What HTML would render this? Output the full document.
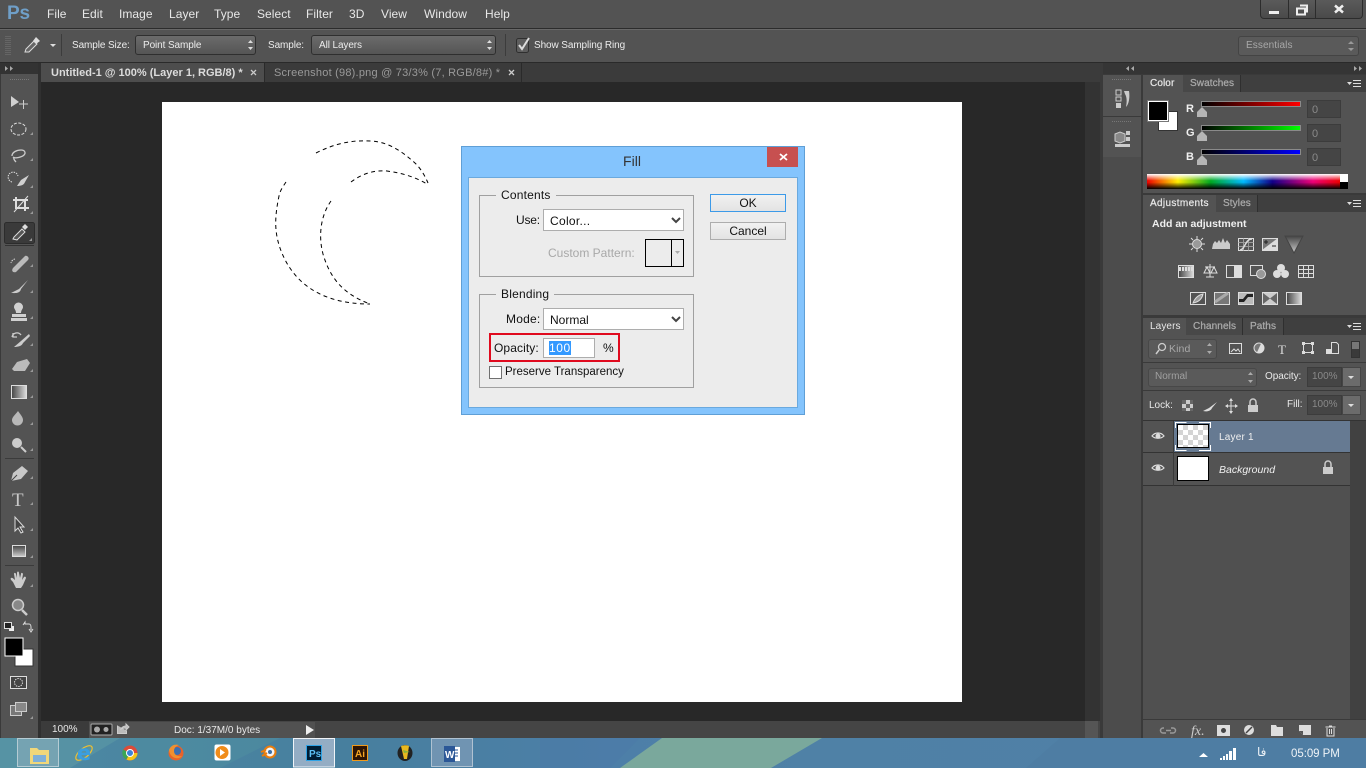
<!DOCTYPE html>
<html><head><meta charset="utf-8"><title>Photoshop Fill</title>
<style>
html,body{margin:0;padding:0;width:1366px;height:768px;overflow:hidden;background:#282828}
*{box-sizing:border-box}
.a,.t{position:absolute}
.t{font:11px "Liberation Sans","DejaVu Sans",sans-serif;white-space:nowrap;color:#e6e6e6;line-height:14px}
.m{font-size:12px;color:#e8e8e8;top:7px;letter-spacing:.05px}
.o{top:39px;font-size:10px;letter-spacing:-.1px;color:#ececec}
.sel{position:absolute;border:1px solid #2f2f2f;border-radius:3px;background:linear-gradient(#6b6b6b,#555)}
.d{font:12px "Liberation Sans",sans-serif;color:#111;letter-spacing:.2px}
.p{font-size:10px;font-weight:normal;letter-spacing:.1px;-webkit-text-stroke:.25px currentColor}
.dim{color:#999}
.ws{position:absolute;background:#fff;border:1px solid #adadad}
.btn{position:absolute;background:linear-gradient(#f1f1f1,#e3e3e3);border:1px solid #adadad;text-align:center;font:12px/17px "Liberation Sans",sans-serif;color:#111}
</style></head><body>
<!-- chrome backgrounds -->
<div class="a" style="left:0;top:0;width:1366px;height:28px;background:#535353"></div>
<div class="a" style="left:0;top:28px;width:1366px;height:1px;background:#2c2c2c"></div>
<div class="a" style="left:0;top:29px;width:1366px;height:33px;background:#535353;border-top:1px solid #686868"></div>
<div class="a" style="left:0;top:62px;width:1366px;height:1px;background:#2a2a2a"></div>
<div class="a" style="left:0;top:63px;width:1103px;height:19px;background:#3b3b3b"></div>
<div class="a" style="left:40px;top:82px;width:1063px;height:656px;background:#282828"></div>
<!-- tabs -->
<div class="a" style="left:41px;top:63px;width:223px;height:19px;background:#4d4d4d"></div>
<div class="a" style="left:264px;top:63px;width:1px;height:19px;background:#2a2a2a"></div>
<div class="a" style="left:521px;top:63px;width:1px;height:19px;background:#2a2a2a"></div>
<div class="t" style="left:51px;top:66px;font-size:11px;font-weight:bold;color:#dcdcdc;letter-spacing:0">Untitled-1 @ 100% (Layer 1, RGB/8) *</div>
<div class="t" style="left:274px;top:66px;font-size:11px;color:#9a9a9a;letter-spacing:.22px">Screenshot (98).png @ 73/3% (7, RGB/8#) *</div>
<!-- left toolbar bg -->
<div class="a" style="left:0;top:63px;width:38px;height:675px;background:#535353;border-left:1px solid #3a3a3a"></div>
<div class="a" style="left:0;top:63px;width:39px;height:11px;background:#333"></div>
<div class="a" style="left:38px;top:63px;width:3px;height:675px;background:#303030"></div>
<!-- document -->
<div class="a" style="left:162px;top:102px;width:800px;height:600px;background:#fff"></div>
<!-- status bar -->
<div class="a" style="left:41px;top:721px;width:1062px;height:17px;background:#454545"></div>
<div class="a" style="left:89px;top:722px;width:226px;height:16px;background:#515151"></div>
<div class="a" style="left:41px;top:721px;width:48px;height:17px;background:#3b3b3b"></div>
<div class="a" style="left:1085px;top:82px;width:15px;height:639px;background:#333"></div>
<div class="a" style="left:1085px;top:721px;width:13px;height:17px;background:#555"></div>
<div class="t" style="left:52px;top:723px;font-size:10px;color:#e8e8e8">100%</div>
<div class="t" style="left:174px;top:724px;font-size:10px;color:#e8e8e8;letter-spacing:0">Doc: 1/37M/0 bytes</div>
<!-- right dock -->
<div class="a" style="left:1100px;top:63px;width:266px;height:675px;background:#3a3a3a"></div>
<div class="a" style="left:1103px;top:63px;width:263px;height:11px;background:#353535"></div>
<div class="a" style="left:1103px;top:75px;width:38px;height:41px;background:#535353"></div>
<div class="a" style="left:1103px;top:117px;width:38px;height:40px;background:#535353"></div>
<div class="a" style="left:1103px;top:157px;width:38px;height:581px;background:#4c4c4c"></div>
<div class="a" style="left:1143px;top:75px;width:223px;height:118px;background:#535353"></div>
<div class="a" style="left:1143px;top:195px;width:223px;height:120px;background:#535353"></div>
<div class="a" style="left:1143px;top:318px;width:223px;height:420px;background:#535353"></div>
<!-- panel tab strips -->
<div class="a" style="left:1183px;top:75px;width:183px;height:17px;background:#3f3f3f"></div>
<div class="a" style="left:1183px;top:75px;width:58px;height:17px;background:#484848;border-right:1px solid #2f2f2f"></div>
<div class="a" style="left:1216px;top:195px;width:150px;height:17px;background:#3f3f3f"></div>
<div class="a" style="left:1216px;top:195px;width:42px;height:17px;background:#484848;border-right:1px solid #2f2f2f"></div>
<div class="a" style="left:1186px;top:318px;width:180px;height:17px;background:#3f3f3f"></div>
<div class="a" style="left:1186px;top:318px;width:98px;height:17px;background:#484848;border-right:1px solid #2f2f2f"></div>
<div class="a" style="left:1242px;top:318px;width:1px;height:17px;background:#2f2f2f"></div>
<div class="t p" style="left:1150px;top:77px;color:#e6e6e6">Color</div>
<div class="t p" style="left:1190px;top:77px;color:#aaa">Swatches</div>
<div class="t p" style="left:1150px;top:197px;color:#e6e6e6;letter-spacing:.35px">Adjustments</div>
<div class="t p" style="left:1223px;top:197px;color:#aaa">Styles</div>
<div class="t p" style="left:1150px;top:320px;color:#e6e6e6;-webkit-text-stroke:0">Layers</div>
<div class="t p" style="left:1193px;top:320px;color:#aaa">Channels</div>
<div class="t p" style="left:1250px;top:320px;color:#aaa">Paths</div>
<div class="t" style="left:1152px;top:217px;font-size:10.5px;font-weight:bold;color:#f0f0f0">Add an adjustment</div>
<!-- colour panel -->
<div class="a" style="left:1158px;top:111px;width:20px;height:20px;background:#fff;border:1px solid #333"></div>
<div class="a" style="left:1148px;top:101px;width:20px;height:20px;background:#000;border:1px solid #fff;outline:1px solid #777"></div>
<div class="t" style="left:1186px;top:102px;color:#f0f0f0;font-weight:bold">R</div>
<div class="t" style="left:1186px;top:126px;color:#f0f0f0;font-weight:bold">G</div>
<div class="t" style="left:1186px;top:150px;color:#f0f0f0;font-weight:bold">B</div>
<div class="a" style="left:1201px;top:101px;width:100px;height:6px;background:linear-gradient(90deg,#000,#f00);border:1px solid #8a8a8a"></div>
<div class="a" style="left:1201px;top:125px;width:100px;height:6px;background:linear-gradient(90deg,#000,#0f0);border:1px solid #8a8a8a"></div>
<div class="a" style="left:1201px;top:149px;width:100px;height:6px;background:linear-gradient(90deg,#000,#00f);border:1px solid #8a8a8a"></div>
<div class="a" style="left:1307px;top:100px;width:34px;height:18px;background:#454545;border:1px solid #3c3c3c"></div>
<div class="a" style="left:1307px;top:124px;width:34px;height:18px;background:#454545;border:1px solid #3c3c3c"></div>
<div class="a" style="left:1307px;top:148px;width:34px;height:18px;background:#454545;border:1px solid #3c3c3c"></div>
<div class="t dim" style="left:1312px;top:103px;font-size:11px;color:#8a8a8a">0</div>
<div class="t dim" style="left:1312px;top:127px;font-size:11px;color:#8a8a8a">0</div>
<div class="t dim" style="left:1312px;top:151px;font-size:11px;color:#8a8a8a">0</div>
<div class="a" style="left:1147px;top:174px;width:193px;height:15px;background:linear-gradient(#fff 0%,rgba(255,255,255,0) 45%,rgba(0,0,0,0) 55%,#000 100%),linear-gradient(90deg,#e00 0%,#fe0 16%,#0a2 33%,#0bf 50%,#108 65%,#e07 86%,#e00 100%)"></div>
<div class="a" style="left:1340px;top:174px;width:8px;height:8px;background:#fff"></div>
<div class="a" style="left:1340px;top:182px;width:8px;height:7px;background:#000"></div>
<!-- layers controls -->
<div class="sel" style="left:1148px;top:339px;width:69px;height:20px;background:#5a5a5a;border-color:#484848"></div>
<div class="t" style="left:1169px;top:342px;color:#a8a8a8;font-size:10.5px;letter-spacing:.1px">Kind</div>
<div class="a" style="left:1143px;top:362px;width:223px;height:1px;background:#3a3a3a"></div>
<div class="sel" style="left:1148px;top:368px;width:109px;height:19px;background:#5a5a5a;border-color:#484848"></div>
<div class="t" style="left:1155px;top:370px;color:#a0a0a0;font-size:10px">Normal</div>
<div class="t" style="left:1265px;top:370px;font-size:10px;color:#e8e8e8;letter-spacing:-.05px">Opacity:</div>
<div class="a" style="left:1307px;top:367px;width:35px;height:20px;background:#454545;border:1px solid #3c3c3c"></div>
<div class="a" style="left:1342px;top:367px;width:19px;height:20px;background:#6b6b6b;border:1px solid #454545"></div>
<div class="t" style="left:1312px;top:370px;font-size:10px;color:#8a8a8a">100%</div>
<div class="a" style="left:1143px;top:390px;width:223px;height:1px;background:#3a3a3a"></div>
<div class="t" style="left:1149px;top:399px;font-size:10px;color:#e8e8e8">Lock:</div>
<div class="t" style="left:1287px;top:398px;font-size:10px;color:#e8e8e8">Fill:</div>
<div class="a" style="left:1307px;top:395px;width:35px;height:20px;background:#454545;border:1px solid #3c3c3c"></div>
<div class="a" style="left:1342px;top:395px;width:19px;height:20px;background:#6b6b6b;border:1px solid #454545"></div>
<div class="t" style="left:1312px;top:398px;font-size:10px;color:#8a8a8a">100%</div>
<div class="a" style="left:1143px;top:420px;width:223px;height:1px;background:#333"></div>
<!-- layer rows -->
<div class="a" style="left:1350px;top:421px;width:16px;height:298px;background:#414141"></div>
<div class="a" style="left:1143px;top:486px;width:207px;height:233px;background:#505050"></div>
<div class="a" style="left:1143px;top:421px;width:207px;height:65px;background:#535353"></div>
<div class="a" style="left:1174px;top:421px;width:176px;height:31px;background:#667a92"></div>
<div class="a" style="left:1143px;top:452px;width:207px;height:1px;background:#333"></div>
<div class="a" style="left:1143px;top:485px;width:207px;height:1px;background:#333"></div>
<div class="a" style="left:1173px;top:421px;width:1px;height:65px;background:#3a3a3a"></div>
<div class="a" style="left:1177px;top:424px;width:32px;height:24px;border:1px solid #000;background:conic-gradient(#d4d4d4 25%,#fff 0 50%,#d4d4d4 0 75%,#fff 0) 0 0/10px 10px"></div>
<div class="a" style="left:1177px;top:456px;width:32px;height:25px;border:1px solid #000;background:#fff"></div>
<div class="t" style="left:1219px;top:431px;font-size:10px;letter-spacing:.2px;color:#f0f0f0">Layer 1</div>
<div class="t" style="left:1219px;top:463px;font-size:10.5px;font-style:italic;color:#f0f0f0;letter-spacing:0">Background</div>
<div class="a" style="left:1143px;top:719px;width:223px;height:19px;background:#535353;border-top:1px solid #3a3a3a"></div>
<!-- menu text -->
<div class="t" style="left:7px;top:1px;font-size:19px;line-height:26px;font-weight:bold;color:#6f9fc8;letter-spacing:-.2px">Ps</div>
<div class="t m" style="left:47px">File</div>
<div class="t m" style="left:82px">Edit</div>
<div class="t m" style="left:119px">Image</div>
<div class="t m" style="left:169px">Layer</div>
<div class="t m" style="left:214px">Type</div>
<div class="t m" style="left:257px">Select</div>
<div class="t m" style="left:306px">Filter</div>
<div class="t m" style="left:349px">3D</div>
<div class="t m" style="left:381px">View</div>
<div class="t m" style="left:424px">Window</div>
<div class="t m" style="left:485px">Help</div>
<!-- options -->
<div class="t o" style="left:72px">Sample Size:</div>
<div class="sel" style="left:135px;top:35px;width:121px;height:20px"></div>
<div class="t o" style="left:143px">Point Sample</div>
<div class="t o" style="left:268px">Sample:</div>
<div class="sel" style="left:311px;top:35px;width:185px;height:20px"></div>
<div class="t o" style="left:319px">All Layers</div>
<div class="t o" style="left:534px">Show Sampling Ring</div>
<div class="sel" style="left:1238px;top:36px;width:121px;height:20px;background:#5a5a5a;border-color:#444"></div>
<div class="t o" style="left:1246px;top:39px;color:#a8a8a8;letter-spacing:.1px">Essentials</div>
<!-- window buttons -->
<div class="a" style="left:1260px;top:0;width:103px;height:19px;background:linear-gradient(#5a5a5a,#4a4a4a);border:1px solid #2c2c2c;border-top:0;border-radius:0 0 4px 4px"></div>
<div class="a" style="left:1288px;top:0;width:1px;height:18px;background:#2c2c2c"></div>
<div class="a" style="left:1315px;top:0;width:1px;height:18px;background:#2c2c2c"></div>

<!-- icon overlay -->
<svg class="a" style="left:0;top:0" width="1366" height="768" viewBox="0 0 1366 768" fill="none">
<defs><linearGradient id="g" x1="0" y1="0" x2="1" y2="0"><stop offset="0" stop-color="#444"/><stop offset="1" stop-color="#ddd"/></linearGradient>
<linearGradient id="v" x1="0" y1="0" x2="0" y2="1"><stop offset="0" stop-color="#444"/><stop offset="1" stop-color="#ccc"/></linearGradient></defs>
<!-- grips -->
<g stroke="#777" stroke-width="1"><path d="M6 36v20M8 36v20M10 36v20" stroke-dasharray="1 1"/><path d="M10 79.500h19M1112 79.500h19M1112 121.500h19" stroke-dasharray="1 1"/></g>
<g fill="#aaa"><path d="M5 66l3 2.500-3 2.500zM10 66l3 2.500-3 2.500zM1134 66l-3 2.500 3 2.500zM1129 66l-3 2.500 3 2.500zM1354 66l3 2.500-3 2.500zM1359 66l3 2.500-3 2.500z"/></g>
<!-- options eyedropper -->
<path d="M25 52l1-3 8-8 3 3-8 8z" fill="#666" stroke="#ddd"/><path d="M33 41l3-4 4 4-4 3z" fill="#ddd"/>
<path d="M50 44h6l-3 3z" fill="#ddd"/><path d="M61.500 34v22M505.500 34v22" stroke="#3c3c3c"/>
<g fill="#ddd"><path d="M248 43l2.500-3 2.500 3zM248 47l2.500 3 2.500-3zM487 43l2.500-3 2.500 3zM487 47l2.500 3 2.500-3z"/></g>
<g fill="#999"><path d="M1348 44l3-3 3 3zM1348 48l3 3 3-3z"/></g>
<rect x="516.500" y="38.500" width="12" height="14" rx="2" fill="#5e5e5e" stroke="#2f2f2f"/><path d="M519 45l3 4 7-11" stroke="#ddd" stroke-width="2"/>
<!-- tab close -->
<g stroke="#ccc" stroke-width="1.300"><path d="M251 70l5 5M256 70l-5 5M509 70l5 5M514 70l-5 5"/></g>
<!-- window controls -->
<path d="M1269 11h10v3h-10z" fill="#eee"/><path d="M1297 8.500h8v6h-8zM1300 5.500h7v6h-2" stroke="#eee" stroke-width="2"/><path d="M1335 5.500l8 7M1343 5.500l-8 7" stroke="#eee" stroke-width="2.500"/>
<!-- toolbar icons -->
<g fill="#d0d0d0" stroke="none">
<path d="M11 96v11l8-5z"/><path d="M19 104h9M23.500 100v9" stroke="#ccc"/>
</g>
<ellipse cx="18.500" cy="129" rx="7.500" ry="6" stroke="#ddd" stroke-dasharray="3 1.500"/>
<path d="M12 156c0-4 5-6 9-6s5 3 3 5-9 4-11 2m1 0c-1 2 1 4 2 5" stroke="#ccc" stroke-width="1.300"/>
<path d="M12 182a5 5 0 1 1 6-6" stroke="#ddd" stroke-dasharray="1.500 1"/><path d="M29 175l-8 5-4 6c4 0 7-1 8-4z" fill="#d0d0d0"/>
<path d="M13 200h15M16 197v11h13M25 200v11" stroke="#ddd" stroke-width="2"/><path d="M14 212l14-16" stroke="#ddd"/>
<rect x="4.500" y="222.500" width="30" height="21" rx="2" fill="#3a3a3a" stroke="#2c2c2c"/><path d="M5 245.500h29" stroke="#333"/>
<path d="M13 239l1-2 8-8 3 3-8 8z" fill="#555" stroke="#ddd"/><path d="M22 227l3-3 3 3-3 3z" fill="#ddd"/>
<path d="M13 268l12-12c2-1 5 2 3 4l-12 12c-3 1-5-1-3-4z" fill="#bbb"/><path d="M15 259a5 5 0 0 0-4 4" stroke="#ddd" stroke-dasharray="1.500 1"/>
<path d="M28 280l-9 9-8 4c3 0 9 1 10-4z" fill="#ccc"/>
<path d="M11 318h16v3H11zM12 314h14v3H12zM16 313c0-3-2-4-2-6a4 4 0 1 1 9 0c0 2-2 3-2 6z" fill="#d0d0d0"/>
<path d="M12 337a5 5 0 0 1 9-2M13 333v4h4" stroke="#ccc" stroke-width="1.300"/><path d="M29 334l-8 7-7 6c4 0 8-1 9-4l7-7" fill="#ccc"/>
<path d="M12 369l5-7 10-3 3 4-5 8H14z" fill="#bbb"/>
<rect x="11.500" y="385.500" width="15" height="13" fill="url(#g)" stroke="#ddd"/>
<path d="M18 411c2 3 5 6 5 9a5 5 0 0 1-11 0c0-3 4-6 6-9z" fill="#b8b8b8"/>
<circle cx="17" cy="443" r="5" fill="#ccc"/><path d="M21 447l5 5" stroke="#ccc" stroke-width="2"/>
<path d="M5 458.500h29M5 565.500h29" stroke="#3b3b3b"/>
<path d="M11 481l2-8 9-7 6 5-7 8z" fill="#c8c8c8"/><path d="M11 481l6-6" stroke="#444"/>
<text x="12" y="506" style="font:19px 'Liberation Serif',serif" fill="#c8c8c8">T</text>
<path d="M15 517v14l3-3 3 5 2-1-3-5h4z" fill="#444" stroke="#ddd"/>
<rect x="12.500" y="545.500" width="13" height="11" fill="url(#v)" stroke="#ddd"/>
<path d="M13 582c-2-2-3-3-2-4s3 1 4 2l-1-6c0-2 2-1 2 0l1 4 0-5c0-2 2-2 2 0l1 5 1-4c0-2 2-1 2 0l-1 6 2-3c1-1 2 0 2 1l-3 7-2 3h-5z" fill="#ccc"/>
<circle cx="18" cy="605" r="5.500" fill="#888" stroke="#ccc" stroke-width="1.500"/><path d="M22 610l5 5" stroke="#ccc" stroke-width="2.500"/>
<rect x="9" y="626" width="5" height="5" fill="#eee"/><rect x="4.500" y="622.500" width="7" height="6" fill="#222" stroke="#ddd"/>
<path d="M23 625l2-3v2h4c1 0 2 1 2 3v3m-2-1l2 3 2-3" stroke="#ddd"/>
<rect x="15" y="649" width="18" height="17" fill="#fff" stroke="#333"/><rect x="5" y="638" width="18" height="18" fill="#000" stroke="#fff"/>
<rect x="10.500" y="676.500" width="16" height="12" fill="#444" stroke="#ddd"/><circle cx="18.500" cy="682.500" r="4" stroke="#ddd" stroke-dasharray="1.500 1"/>
<rect x="10.500" y="705.500" width="11" height="10" fill="#777" stroke="#ccc"/><rect x="15.500" y="702.500" width="11" height="9" fill="#888" stroke="#ccc"/>
<!-- corner triangles -->
<g fill="#999"><path d="M33 135v-3l-3 3zM33 161v-3l-3 3zM33 188v-3l-3 3zM33 214v-3l-3 3zM32 241v-3l-3 3zM33 267v-3l-3 3zM33 293v-3l-3 3zM33 319v-3l-3 3zM33 346v-3l-3 3zM33 372v-3l-3 3zM33 398v-3l-3 3zM33 425v-3l-3 3zM33 451v-3l-3 3zM33 479v-3l-3 3zM33 505v-3l-3 3zM33 531v-3l-3 3zM33 558v-3l-3 3zM33 587v-3l-3 3zM33 719v-3l-3 3z"/></g>
<!-- status icons -->
<rect x="91" y="724" width="21" height="11" rx="1" fill="#222" stroke="#aaa"/><g fill="#aaa"><circle cx="97" cy="729.500" r="3"/><circle cx="106" cy="729.500" r="2.500"/></g>
<path d="M117.500 725.500v8h9v-3M121 729c1-2 3-3 5-3v-2l3 3-3 3v-2c-2 0-3 0-5 1z" stroke="#ccc" fill="#bbb"/>
<path d="M306 725l8 5-8 5z" fill="#eee"/>
<!-- selection marching ants -->
<g stroke="#000" stroke-width="1" stroke-dasharray="4 3.500">
<path d="M316 153c20-10 36-13 55-12 18 1 32 11 45 23 5 5 9 12 12 19"/>
<path d="M351 182c12-9 24-12 36-11 14 2 26 5 40 13"/>
<path d="M286 182c-4 6-6 9-7 14-5 24-4 37 1 52 12 34 40 56 90 56"/>
<path d="M331 201c-10 14-13 34-8 53 7 24 20 40 47 50"/>
</g>
<!-- panel menus -->
<g fill="#ddd"><path d="M1347 82h5l-2.500 3zM1347 202h5l-2.500 3zM1347 325h5l-2.500 3z"/></g>
<g stroke="#ddd"><path d="M1353 80.500h8M1353 83.500h8M1353 86.500h8M1353 200.500h8M1353 203.500h8M1353 206.500h8M1353 323.500h8M1353 326.500h8M1353 329.500h8"/></g>
<!-- slider thumbs -->
<g fill="#b5b5b5"><path d="M1197 117v-5l5-5 5 5v5zM1197 141v-5l5-5 5 5v5zM1197 165v-5l5-5 5 5v5z"/></g>
<!-- dock icons -->
<g fill="#ccc"><rect x="1116" y="90" width="5" height="5" stroke="#ccc" fill="none"/><rect x="1116" y="97" width="5" height="4" stroke="#ccc" fill="none"/><rect x="1116" y="103" width="5" height="5"/><path d="M1124 91h5c1 6 0 13-3 16 1-5 1-10-1-13z"/>
<path d="M1115 134l5-2 5 2v7l-5 2-5-2z" stroke="#ccc" fill="#888"/><rect x="1126" y="131" width="4" height="4"/><rect x="1126" y="137" width="4" height="4"/><rect x="1115" y="144" width="15" height="3"/></g>
<!-- adjustment icons -->
<g stroke="#ddd" fill="none">
<circle cx="1197" cy="244" r="4.500" fill="#999"/><path d="M1197 236v3M1197 249v3M1189 244h3M1202 244h3M1191 238l2 2M1201 248l2 2M1203 238l-2 2M1193 248l-2 2"/>
<path d="M1213 249h18M1213 244l2-3 2 2 2-3 2 3 2-5 2 5 2-3 3 4v5h-18z" fill="#ccc" stroke="none"/>
<rect x="1238.500" y="238.500" width="15" height="12"/><path d="M1238.500 242.500h15M1238.500 246.500h15M1243.500 238.500v12M1248.500 238.500v12" stroke="#999"/><path d="M1240 250c5 0 5-11 12-11" stroke-width="1.500"/>
<rect x="1262.500" y="238.500" width="15" height="12" fill="#777"/><path d="M1262 250l16-12v12z" fill="#ddd" stroke="none"/><path d="M1264 242h4M1266 240v4M1272 246h4" stroke="#222"/>
<path d="M1285 236h18l-9 17z" fill="url(#v)" stroke="#444"/>
<rect x="1178.500" y="265.500" width="15" height="12" fill="url(#g)"/><path d="M1179 269h14" stroke="#ddd" stroke-width="4" stroke-dasharray="2 1"/>
<path d="M1210 264v13M1205 267h10M1204 273l3-6 3 6zM1211 273l3-6 3 6zM1206 277h8" />
<rect x="1226.500" y="265.500" width="15" height="12"/><rect x="1234" y="265" width="8" height="13" fill="#ddd" stroke="none"/>
<rect x="1250.500" y="265.500" width="12" height="10" fill="#555"/><circle cx="1261" cy="274" r="4.500" fill="#999"/>
<g fill="#ddd" stroke="none"><circle cx="1281" cy="268" r="4"/><circle cx="1277" cy="274" r="4"/><circle cx="1285" cy="274" r="4"/></g>
<rect x="1298.500" y="265.500" width="15" height="12"/><path d="M1298.500 269.500h15M1298.500 273.500h15M1303.500 265.500v12M1308.500 265.500v12"/>
<rect x="1190.500" y="292.500" width="15" height="12"/><path d="M1193 303c2-5 5-8 10-9-1 5-4 8-10 9z" fill="#999"/>
<rect x="1214.500" y="292.500" width="15" height="12" fill="#777"/><path d="M1215 302l13-9" stroke-width="3" stroke="#aaa"/>
<rect x="1238.500" y="292.500" width="15" height="12" fill="#bbb"/><path d="M1239 302h5l4-5h5v-3h-6l-4 5h-4z" fill="#222" stroke="none"/>
<rect x="1262.500" y="292.500" width="15" height="12" fill="#ccc"/><path d="M1263 293l14 11v-11l-14 11z" fill="#666" stroke="none"/>
<rect x="1286.500" y="292.500" width="15" height="12" fill="url(#g)"/>
</g>
<!-- filter row -->
<circle cx="1162" cy="347" r="3.500" stroke="#ccc" stroke-width="1.300"/><path d="M1159 350l-3 4" stroke="#ccc" stroke-width="1.500"/>
<g fill="#aaa"><path d="M1207 346l2.500-3 2.500 3zM1207 351l2.500 3 2.500-3zM1248 375l2.500-3 2.500 3zM1248 380l2.500 3 2.500-3z"/></g>
<g stroke="#ddd"><rect x="1229.500" y="343.500" width="12" height="10"/><path d="M1231 352l3-3 2 2 2-2 2 3" stroke="#ddd"/></g>
<circle cx="1259" cy="348" r="5" fill="#777" stroke="#ddd"/><path d="M1259 343a5 5 0 0 1 0 10z" fill="#ddd" transform="rotate(25 1259 348)"/>
<text x="1278" y="354" style="font:13px 'Liberation Serif',serif" fill="#ddd">T</text>
<g stroke="#ddd"><rect x="1303.500" y="343.500" width="9" height="9"/></g><g fill="#ddd"><rect x="1302" y="342" width="3" height="3"/><rect x="1311" y="342" width="3" height="3"/><rect x="1302" y="351" width="3" height="3"/><rect x="1311" y="351" width="3" height="3"/></g>
<path d="M1331.500 342.500h5l2 2v9h-7z" stroke="#ddd"/><rect x="1326" y="349" width="6" height="5" fill="#ddd"/>
<rect x="1351.500" y="341.500" width="8" height="16" fill="#3a3a3a" stroke="#333"/><rect x="1352" y="342" width="7" height="7" fill="#777"/>
<g fill="#ddd"><path d="M1348 376h6l-3 3zM1348 404h6l-3 3zM1348 376h6l-3 3z"/></g>
<!-- lock row -->
<g><rect x="1182" y="400" width="11" height="11" fill="#ccc"/><path d="M1182 400h4v4h-4zM1190 400h3v4h-3zM1186 404h4v4h-4zM1182 408h4v3h-4zM1190 408h3v3h-3z" fill="#666"/></g>
<path d="M1217 402l-8 6-6 3c4 1 8 0 9-3z" fill="#ddd"/>
<path d="M1231 400v12M1226 406h11" stroke="#ddd"/><path d="M1231 398l-2 3h4zM1231 414l-2-3h4zM1225 406l3-2v4zM1238 406l-3-2v4z" fill="#ddd"/>
<rect x="1248" y="405" width="10" height="7" fill="#ccc"/><path d="M1250 405v-3a3 3 0 0 1 6 0v3" stroke="#ccc" stroke-width="1.500"/>
<!-- eyes -->
<g stroke="#ddd" stroke-width="1.200"><path d="M1152 436c3-4 9-4 12 0-3 3-9 3-12 0zM1152 468c3-4 9-4 12 0-3 3-9 3-12 0z"/></g><g fill="#ddd"><circle cx="1158" cy="436" r="2.500"/><circle cx="1158" cy="468" r="2.500"/></g>
<g stroke="#fff" stroke-width="1"><path d="M1175.500 428v-5.500h11M1199 422.500h11.500v5.500M1175.500 445v5.500h11M1199 450.500h11.500v-5.500"/></g>
<rect x="1323" y="467" width="10" height="7" fill="#ccc"/><path d="M1325 467v-3a3 3 0 0 1 6 0v3" stroke="#ccc" stroke-width="1.500"/>
<!-- layers bottom -->
<path d="M1164 728h-1a2.500 2.500 0 0 0 0 5h3M1171 728h2a2.500 2.500 0 0 1 0 5h-3M1166 730.500h5" stroke="#999" stroke-width="1.500"/>
<text x="1191" y="735" style="font:italic 14px 'Liberation Serif',serif" fill="#ccc">fx.</text>
<rect x="1217" y="725" width="13" height="11" fill="#ddd"/><circle cx="1223.500" cy="730.500" r="2.500" fill="#444"/>
<circle cx="1249" cy="730" r="5" fill="#ddd"/><path d="M1246 733l6-6" stroke="#444" stroke-width="1.500"/>
<path d="M1271 725h5l1 2h6v9h-12z" fill="#ddd"/>
<path d="M1299 725h12v10h-8l-4-4z" fill="#ddd"/><path d="M1299 731l4 4v-4z" fill="#555"/>
<path d="M1325.500 727h10M1327 728v8h7v-8M1329 726h3M1329.500 729v5M1331.500 729v5" stroke="#ddd"/>
</svg>

<!-- dialog -->
<div class="a" style="left:461px;top:146px;width:344px;height:269px;background:#84c4fd;border:1px solid #5f9fd6"></div>
<div class="t" style="left:460px;top:153px;width:344px;text-align:center;font-size:14px;line-height:17px;color:#333">Fill</div>
<div class="a" style="left:767px;top:147px;width:31px;height:20px;background:#c75050"></div>
<svg class="a" style="left:779px;top:153px" width="9" height="8"><path d="M1 1l7 6M8 1l-7 6" stroke="#fff" stroke-width="1.800"/></svg>
<div class="a" style="left:468px;top:177px;width:330px;height:231px;background:#ececec;border:1px solid #6aa9de"></div>
<div class="a" style="left:479px;top:195px;width:215px;height:82px;border:1px solid #a0a0a0"></div>
<div class="a" style="left:479px;top:294px;width:215px;height:94px;border:1px solid #a0a0a0"></div>
<div class="t d" style="left:496px;top:188px;padding:0 5px;background:#ececec">Contents</div>
<div class="t d" style="left:496px;top:287px;padding:0 5px;background:#ececec">Blending</div>
<div class="t d" style="left:516px;top:213px;letter-spacing:-.2px">Use:</div>
<div class="ws" style="left:543px;top:209px;width:141px;height:22px"></div>
<div class="t d" style="left:550px;top:214px;letter-spacing:.3px">Color...</div>
<div class="t d" style="left:548px;top:246px;color:#a8a8a8;letter-spacing:0">Custom Pattern:</div>
<div class="a" style="left:645px;top:239px;width:39px;height:28px;background:#ececec;border:1px solid #000"></div>
<div class="a" style="left:671px;top:240px;width:1px;height:26px;background:#000"></div>
<svg class="a" style="left:672px;top:250px" width="11" height="6"><path d="M3 1h5L5.500 4z" fill="#aaa"/></svg>
<div class="t d" style="left:506px;top:312px;letter-spacing:.2px">Mode:</div>
<div class="ws" style="left:543px;top:308px;width:141px;height:22px"></div>
<div class="t d" style="left:550px;top:313px;letter-spacing:0">Normal</div>
<svg class="a" style="left:670px;top:217px" width="12" height="8"><path d="M2 1l4 4 4-4" stroke="#444" stroke-width="2" fill="none"/></svg>
<svg class="a" style="left:670px;top:316px" width="12" height="8"><path d="M2 1l4 4 4-4" stroke="#444" stroke-width="2" fill="none"/></svg>
<div class="a" style="left:489px;top:333px;width:131px;height:29px;border:2px solid #e00a1e"></div>
<div class="t d" style="left:494px;top:341px;letter-spacing:.1px">Opacity:</div>
<div class="ws" style="left:543px;top:338px;width:52px;height:20px"></div>
<div class="a" style="left:549px;top:341px;width:22px;height:14px;background:#3399ff"></div>
<div class="t d" style="left:549px;top:341px;color:#fff;letter-spacing:.6px">100</div>
<div class="t d" style="left:603px;top:341px">%</div>
<div class="a" style="left:489px;top:366px;width:13px;height:13px;background:#fff;border:1px solid #707070"></div>
<div class="t d" style="left:505px;top:366px;font-size:11.500px;letter-spacing:0">Preserve Transparency</div>
<div class="btn" style="left:710px;top:194px;width:76px;height:18px;border-color:#3c9ae8">OK</div>
<div class="btn" style="left:710px;top:222px;width:76px;height:18px">Cancel</div>

<!-- taskbar -->
<div class="a" style="left:0;top:738px;width:1366px;height:30px;background:linear-gradient(90deg,#4d8aa3 0,#477f9e 25%,#4d7fa8 45%,#4f81a6 60%,#507fa6 100%)"></div>
<svg class="a" style="left:0;top:738px" width="1366" height="30" fill="none">
<path d="M0 0h120L70 30H0z" fill="#5e9aa6" opacity=".55"/>
<path d="M130 0h150l-60 30H130z" fill="#4f90a0" opacity=".5"/>
<path d="M540 0h100l-30 30h-70z" fill="#4a78a8" opacity=".4"/>
<path d="M662 0h160l-51 30H620z" fill="#7aa89c"/>
<path d="M1060 0h306v30h-340z" fill="#4e7da3"/>
<!-- taskbar buttons -->
<rect x="17.500" y=".500" width="41" height="28" fill="#8fb0bd" fill-opacity=".55" stroke="#c9d8de" stroke-opacity=".8"/>
<rect x="293.500" y=".500" width="41" height="28.500" fill="#aebcd0" fill-opacity=".75" stroke="#f0f4f8"/>
<rect x="431.500" y=".500" width="41" height="28" fill="#8fa5c0" fill-opacity=".55" stroke="#c4d0dc" stroke-opacity=".8"/>
<!-- explorer -->
<path d="M30 10h7l2 2h10v14H30z" fill="#f0d77a"/><rect x="33" y="17" width="13" height="7" fill="#7fb0d8"/>
<!-- IE -->
<ellipse cx="84" cy="15" rx="10" ry="4.500" transform="rotate(-40 84 15)" stroke="#f0c030" stroke-width="1.200"/>
<text x="84" y="22" text-anchor="middle" style="font:bold 21px 'DejaVu Sans',sans-serif" fill="#3a9ee0">e</text>
<!-- chrome -->
<circle cx="130" cy="15" r="7.500" fill="#dd4b39"/><path d="M130 15l7.500 0a7.500 7.500 0 0 1-11 6.500z" fill="#f5c518"/><path d="M130 15l-3.700 6.500a7.500 7.500 0 0 1-3.200-10z" fill="#3aa655"/><circle cx="130" cy="15" r="3.500" fill="#3b82d6" stroke="#fff"/>
<!-- firefox -->
<circle cx="176" cy="15" r="7.500" fill="#e8622a"/><circle cx="177" cy="13" r="4" fill="#3d6fb0"/><path d="M169 12c2-5 6-6 10-5-3 1-5 3-5 6 0 4 4 6 8 5-3 4-12 3-13-6z" fill="#f09030"/>
<!-- media player -->
<rect x="214.500" y="6.500" width="16" height="16" rx="2" fill="#fff"/><circle cx="222" cy="14.500" r="6.500" fill="#f08c1a"/><path d="M220 11l5 3.500-5 3.500z" fill="#fff"/>
<!-- blender -->
<circle cx="270" cy="14" r="5.500" fill="#f5f5f5" stroke="#e87d0d" stroke-width="2"/><circle cx="270" cy="14" r="2" fill="#3a6ea5"/><path d="M261 14l5-2M262 18l5-3" stroke="#e87d0d" stroke-width="2"/>
<!-- ps -->
<rect x="306.500" y="7.500" width="15" height="15" fill="#001d34" stroke="#2fa3e6"/>
<text x="309" y="19" style="font:bold 10px 'Liberation Sans',sans-serif" fill="#5cc0f5">Ps</text>
<!-- ai -->
<rect x="352.500" y="7.500" width="15" height="15" fill="#2e1503" stroke="#f09a1a"/>
<text x="355" y="19" style="font:bold 10px 'Liberation Sans',sans-serif" fill="#f5a623">Ai</text>
<!-- fl -->
<ellipse cx="405" cy="15" rx="7.500" ry="8" fill="#222"/><path d="M401 8c3-1 6-1 8 0l-2 13h-3z" fill="#e8b820"/><path d="M403 12l7 2-6 1z" fill="#8ab53a"/>
<!-- word -->
<rect x="449" y="9" width="11" height="14" fill="#fff"/><path d="M453 12h5M453 15h5M453 18h5" stroke="#2b5797"/><rect x="444" y="8" width="11" height="16" fill="#2b5797"/>
<text x="445" y="20" style="font:bold 10px 'Liberation Sans',sans-serif" fill="#fff">W</text>
<!-- tray -->
<path d="M1199 19l4.500-4 4.500 4z" fill="#fff"/>
<g fill="#fff"><rect x="1220" y="20" width="2" height="2"/><rect x="1223" y="18" width="2" height="4"/><rect x="1226" y="16" width="2" height="6"/><rect x="1229" y="13" width="3" height="9"/><rect x="1233" y="10" width="3" height="12"/></g>
</svg>
<div class="t" style="left:1257px;top:745px;font:12px 'DejaVu Sans','Liberation Sans',sans-serif;color:#eef3f7">فا</div>
<div class="t" style="left:1291px;top:747px;font-size:11.500px;color:#eef3f7;letter-spacing:-.05px">05:09 PM</div>
</body></html>
